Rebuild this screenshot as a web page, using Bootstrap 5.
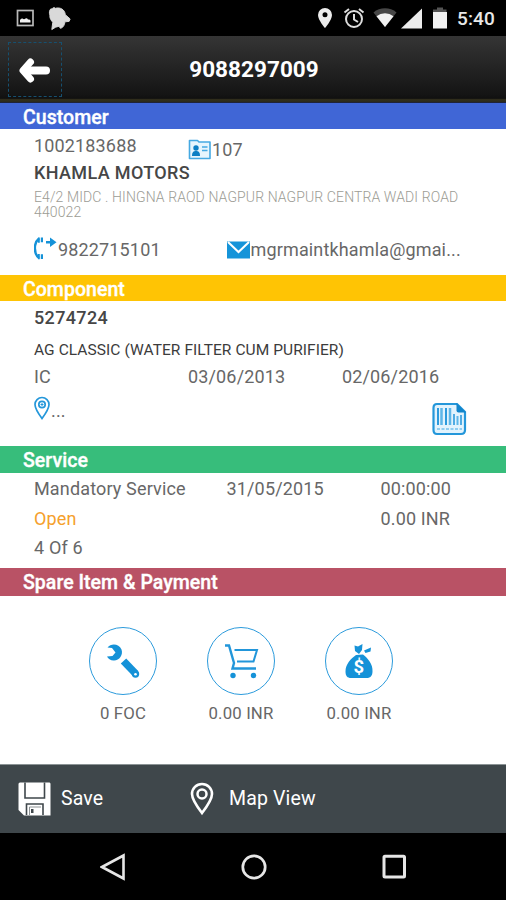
<!DOCTYPE html>
<html lang="en">
<head>
<meta charset="utf-8">
<meta name="viewport" content="width=device-width, initial-scale=1">
<title>9088297009</title>
<link rel="stylesheet" href="https://cdn.jsdelivr.net/npm/bootstrap@5.3.0/dist/css/bootstrap.min.css">
<style>
  body { font-family: Roboto, "Liberation Sans", sans-serif; font-size: 18px; line-height: 1; letter-spacing: .15px; color: #676767; background: #fff; overflow: hidden; }
  svg { display: block; flex: none; }
  .screen { width: 506px; height: 900px; }
  .status-bar { height: 36px; background: #000; padding: 0 11px 0 16px; color: #e8e8e8; }
  .clock { font-size: 19px; font-weight: 500; width: 38px; white-space: nowrap; padding-top: 1px; }
  .app-bar { height: 67px; background: linear-gradient(#353535, #141414 88%, #101010 93%, #33301c 95%, #2b2a1c 98%, #18204a); padding-left: 8px; }
  .back-btn { width: 54px; height: 55px; border: 1px dashed #17506f; }
  .app-title { font-size: 22.5px; font-weight: 700; color: #fff; margin-right: 60px; letter-spacing: .05px; }
  .band { height: 26px; padding: 1px 0 0 23px; color: #fff; font-size: 19.5px; letter-spacing: .04px; font-weight: 500; line-height: 27px; -webkit-text-stroke: .35px #fff; white-space: nowrap; }
  .band-blue { background: #4066d6; }
  .band-yellow { background: #ffc404; }
  .band-green { background: #37bd7b; height: 27px; }
  .band-red { background: #b95265; height: 28px; }
  .panel { padding: 0 10px 0 34px; white-space: nowrap; }
  .panel-customer { height: 146px; }
  .panel-component { height: 145px; }
  .panel-service { height: 95px; padding-top: 1px; line-height: 29.5px; }
  .panel-payment { height: 168px; padding: 31px 0 0 64px; }
  .account-row { height: 34px; line-height: 34px; }
  .card-no { padding-top: 4px; }
  .name { font-size: 18px; font-weight: 500; color: #464646; line-height: 20px; letter-spacing: .36px; }
  .code { padding-top: 7px; }
  .address { font-size: 14px; font-weight: 300; color: #9c9c94; line-height: 15px; margin-top: 7px; letter-spacing: .11px; }
  .contact-row { height: 59px; }
  .phone-icon { margin-bottom: 4px; }
  .product { font-size: 15.5px; color: #3c3c3c; line-height: 18px; margin-top: 13px; letter-spacing: .07px; }
  .dates { line-height: 20px; margin-top: 8px; }
  .pin-icon { margin-top: 9px; }
  .pin-text { margin-top: 15px; }
  .barcode { margin-top: 15px; margin-right: 29px; }
  .open-state { color: #f5a02c; }
  .pay-item { width: 118px; }
  .pay-circle { width: 68px; height: 68px; border: 1.5px solid #2c9bdc; }
  .pay-label { font-size: 16.8px; margin-top: 10px; line-height: 17px; }
  .tool-bar { height: 69px; background: #3f474b; border-top: 1px solid #8b9395; color: #fff; font-size: 19.5px; padding: 0 0 0 18px; }
  .tool-save { width: 172px; }
  .save-label { margin-left: 10px; padding-bottom: 1px; }
  .map-label { margin-left: 15px; padding-bottom: 1px; }
  .nav-keys { height: 67px; background: #000; padding-left: 100px; gap: 115px; }
</style>
<script src="https://cdn.jsdelivr.net/npm/bootstrap@5.3.0/dist/js/bootstrap.bundle.min.js"></script>
</head>
<body>
<div class="screen d-flex flex-column">

  <div class="status-bar d-flex align-items-center">
    <svg width="19" height="18" viewBox="0 0 19 18"><rect x="1.500" y="1.500" width="15.500" height="15" fill="none" stroke="#b9b9b9" stroke-width="1.700"/><path d="M4 13.500V11q1-2 2.500-1.500Q8 11 9.500 9.500 11 8.500 12 10.500q2-.5 2.500 1v2z" fill="#f2f2f2"/></svg>
    <svg class="ms-2 ps-1" width="30" height="26" viewBox="0 0 27 26"><path d="M4 3.500C6 4 7 .5 8.500 3c5-1.500 10 1 10.500 6.500l5 4.500-1 2.500-4.500.5c0 3.500-2.500 7-5 6.500l-.5-2-4 1-4 2.500 1-7.500C5 16 2.500 14 3 10c-1-2.500-.5-5 1-6.500z" fill="#d9d9d9" stroke="#d9d9d9" stroke-linejoin="round"/></svg>
    <div class="ms-auto d-flex align-items-center">
      <svg width="16" height="22" viewBox="0 0 16 22"><path fill-rule="evenodd" d="M8 1a7 7 0 0 0-7 7c0 5 7 13 7 13s7-8 7-13a7 7 0 0 0-7-7zm0 4.300a2.500 2.500 0 1 1 0 5 2.500 2.500 0 0 1 0-5z" fill="#ececec"/></svg>
      <svg class="ms-2 me-1" width="24" height="22" viewBox="0 0 24 22"><g fill="none" stroke="#dedede" stroke-width="2"><circle cx="13" cy="12" r="8"/><path d="M13 7v5.500l4 2.500M3.500 5.500 8 2M22.500 5.500 18 2"/></g></svg>
      <svg class="ms-1" width="24" height="20" viewBox="0 0 24 20"><path d="M.5 4.500a18 18 0 0 1 23 0L12 19z" fill="#474747"/><path d="M3.500 8.200a14 14 0 0 1 17 0L12 19z" fill="#f2f2f2"/></svg>
      <svg class="ms-1" width="21" height="21" viewBox="0 0 21 21"><path d="M0 20.500 21 .5v20z" fill="#ececec"/></svg>
      <svg class="ms-2 me-2" width="19" height="22" viewBox="0 0 19 22"><path d="M3 2.500h4V.5h6v2h3.500V5H3z" fill="#555"/><path d="M3 5h14v16.500H3z" fill="#f2f2f2"/></svg>
      <div class="clock">5:40</div>
    </div>
  </div>

  <div class="app-bar d-flex align-items-center">
    <div class="back-btn d-flex align-items-center justify-content-center">
      <svg width="34" height="28" viewBox="0 0 34 28"><path d="M12.500 6 5 14.500l7.500 8.500" fill="none" stroke="#fff" stroke-width="7" stroke-linecap="round" stroke-linejoin="round"/><path d="M7 14.500h21" stroke="#fff" stroke-width="8" stroke-linecap="round"/></svg>
    </div>
    <div class="app-title flex-fill text-center">9088297009</div>
  </div>

  <div class="band band-blue">Customer</div>
  <div class="panel panel-customer">
    <div class="row g-0 account-row">
      <div class="col-4">1002183688</div>
      <div class="col-4 d-flex align-items-center card-no">
        <svg width="24" height="22" viewBox="0 0 24 22"><path d="M1.500 1.500h8L11 3h11V19.500H1.500z" fill="#e6f5fd" stroke="#45a9e2" stroke-width="1.600" stroke-linejoin="round"/><circle cx="8" cy="9" r="2.700" fill="#0c7fc4"/><path d="M4 17c0-4 1.500-5 4-5s4 1 4 5z" fill="#0c7fc4"/><path d="M14 8h5.500M14 11.500h5.500" stroke="#45a9e2" stroke-width="1.500"/></svg>
        <span>107</span>
      </div>
    </div>
    <div class="name">KHAMLA MOTORS</div>
    <div class="address">E4/2 MIDC . HINGNA RAOD NAGPUR NAGPUR CENTRA WADI ROAD<br>440022</div>
    <div class="row g-0 contact-row">
      <div class="col-5 d-flex align-items-center">
        <svg class="phone-icon" width="24" height="24" viewBox="0 0 24 24"><path d="M5 2.500C-.5 7-.5 17.500 5 22" fill="none" stroke="#1592d8" stroke-width="2.400"/><path d="M4 1.500h1.800v5.200H4zM6.800 1.500H9v4.700H6.800zM4 18h1.800v5.200H4zM6.800 18.300H9V23H6.800zM12 5h5.500v2.600H12zM16 1.500l6.500 4.800-6.500 4.800z" fill="#1592d8"/></svg>
        <span>9822715101</span>
      </div>
      <div class="col-7 d-flex align-items-center">
        <svg width="24" height="18" viewBox="0 0 24 18"><path d="M0 .5h23v17H0z" fill="#1594d9"/><path d="M1 1 11.500 11 22 1" fill="none" stroke="#fff" stroke-width="2"/></svg>
        <span>mgrmaintkhamla@gmai...</span>
      </div>
    </div>
  </div>

  <div class="band band-yellow">Component</div>
  <div class="panel panel-component">
    <div class="name code">5274724</div>
    <div class="product">AG CLASSIC (WATER FILTER CUM PURIFIER)</div>
    <div class="row g-0 dates">
      <div class="col-4">IC</div>
      <div class="col-4">03/06/2013</div>
      <div class="col-4">02/06/2016</div>
    </div>
    <div class="d-flex">
      <svg class="pin-icon" width="17" height="24" viewBox="0 0 17 24"><g fill="none" stroke="#2497da" stroke-width="1.700"><path d="M8 1.500a7 7 0 0 0-7 7C1 13 8 22.500 8 22.500S15 13 15 8.500a7 7 0 0 0-7-7z"/><circle cx="8" cy="8.500" r="3.200"/></g><path d="M6.500 8.500h3M8 7v3" stroke="#2497da"/></svg>
      <span class="pin-text">...</span>
      <svg class="barcode ms-auto" width="35" height="34" viewBox="0 0 35 34"><path d="M5 2h20l8 8v18q0 4-4 4H5q-3.500 0-3.500-4V6q0-4 3.500-4z" fill="#e2f3fd" stroke="#2497da" stroke-width="2.200"/><path d="M24.500 1 34 10.500h-7.500q-2 0-2-2z" fill="#1285cb"/><path d="M6 6v17M14 6v17" stroke="#2c9add" stroke-width="2"/><path d="M9.500 6v17M18 6v17" stroke="#5eb6e8" stroke-width="2.500"/><path d="M22 12v11M29 13v10" stroke="#2c9add" stroke-width="1.600"/><path d="M25.500 14v9" stroke="#5eb6e8" stroke-width="2"/><path d="M5 27h25" stroke="#8fcdf0" stroke-width="2" stroke-dasharray="3 1.500"/></svg>
    </div>
  </div>

  <div class="band band-green">Service</div>
  <div class="panel panel-service">
    <div class="row g-0">
      <div class="col-5">Mandatory Service</div>
      <div class="col-4">31/05/2015</div>
      <div class="col-3">00:00:00</div>
    </div>
    <div class="row g-0">
      <div class="col-9 open-state">Open</div>
      <div class="col-3">0.00 INR</div>
    </div>
    <div>4 Of 6</div>
  </div>

  <div class="band band-red">Spare Item &amp; Payment</div>
  <div class="panel-payment d-flex">
    <div class="pay-item d-flex flex-column align-items-center">
      <div class="pay-circle rounded-circle d-flex align-items-center justify-content-center">
        <svg width="34" height="36" viewBox="0 0 34 36"><path d="M1.500 4.500C5 0 13 .5 15.500 6.500 17.500 12 13 18 7.500 17.500 4.500 17.500 2 15.500 1 13.500l5.500-.5 3-3.500L6 5z" fill="#1592d8"/><path d="m17.500 18 12 12.500" stroke="#1592d8" stroke-width="7.500"/><circle cx="29.500" cy="31" r="3.700" fill="#1592d8"/><circle cx="29.500" cy="31.200" r="1.300" fill="#fff"/></svg>
      </div>
      <div class="pay-label">0 FOC</div>
    </div>
    <div class="pay-item d-flex flex-column align-items-center">
      <div class="pay-circle rounded-circle d-flex align-items-center justify-content-center">
        <svg width="36" height="36" viewBox="0 0 36 36"><g fill="none" stroke="#2296da" stroke-width="2"><path d="M2 2.500h4L11 20l-1.500 5.500H33" stroke-width="2.400"/><path d="M11.500 7H34l-3.500 11.500H14"/></g><circle cx="10" cy="32.500" r="2.700" fill="#1592d8"/><circle cx="30.500" cy="32.500" r="2.700" fill="#1592d8"/></svg>
      </div>
      <div class="pay-label">0.00 INR</div>
    </div>
    <div class="pay-item d-flex flex-column align-items-center">
      <div class="pay-circle rounded-circle d-flex align-items-center justify-content-center">
        <svg width="28" height="36" viewBox="0 0 28 36"><path d="M9.500 2.500 13 3.500 17.500 1l-.5 6-3 4-4-3zM19 7.500l7-3-.5 4-5 1.500zM11 12l7-.5C23 15.500 28 21 27.500 28.500 27.500 33 25 35 22 35H6c-3.500 0-5.500-2-5.500-6.500C.5 21 6 15.500 11 12z" fill="#1592d8"/><text x="14" y="30" text-anchor="middle" font-size="18.500" font-weight="700" fill="#fff">$</text></svg>
      </div>
      <div class="pay-label">0.00 INR</div>
    </div>
  </div>

  <div class="tool-bar d-flex align-items-center">
    <div class="tool-save d-flex align-items-center">
      <svg width="33" height="34" viewBox="0 0 33 34"><path d="M2 .5h29.500Q32.500.5 32.500 2v31.500H6L.5 28V2Q.5.500 2 .5z" fill="#fff"/><path d="M7 .5V16h19.500V.5" fill="none" stroke="#3f474b" stroke-width="1.600"/><path d="M8.500 33V22H25v11" fill="none" stroke="#3f474b" stroke-width="1.600"/><path d="M11.500 33V25H23" fill="none" stroke="#8d9294" stroke-width="1"/><path d="M13 27h2.500v4H13z" fill="#3f474b"/></svg>
      <span class="save-label">Save</span>
    </div>
    <svg width="24" height="34" viewBox="0 0 24 34"><path d="M12 2A10 10 0 0 0 2 12c0 6 10 19 10 19s10-13 10-19A10 10 0 0 0 12 2z" fill="none" stroke="#fff" stroke-width="2.600"/><circle cx="12" cy="12" r="4.500" fill="none" stroke="#fff" stroke-width="2.500"/></svg>
    <span class="map-label">Map View</span>
  </div>

  <div class="nav-keys d-flex align-items-center">
    <svg width="26" height="28" viewBox="0 0 26 28"><path d="M2 14 23.500 2.500v23z" fill="none" stroke="#e6e6e6" stroke-width="2.600"/></svg>
    <svg width="26" height="26" viewBox="0 0 26 26"><circle cx="13" cy="13" r="11.200" fill="none" stroke="#e6e6e6" stroke-width="2.700"/></svg>
    <svg width="25" height="26" viewBox="0 0 25 26"><rect x="2" y="2.300" width="20.500" height="20.800" rx="1" fill="none" stroke="#e6e6e6" stroke-width="3"/></svg>
  </div>
</div>
</body>
</html>
